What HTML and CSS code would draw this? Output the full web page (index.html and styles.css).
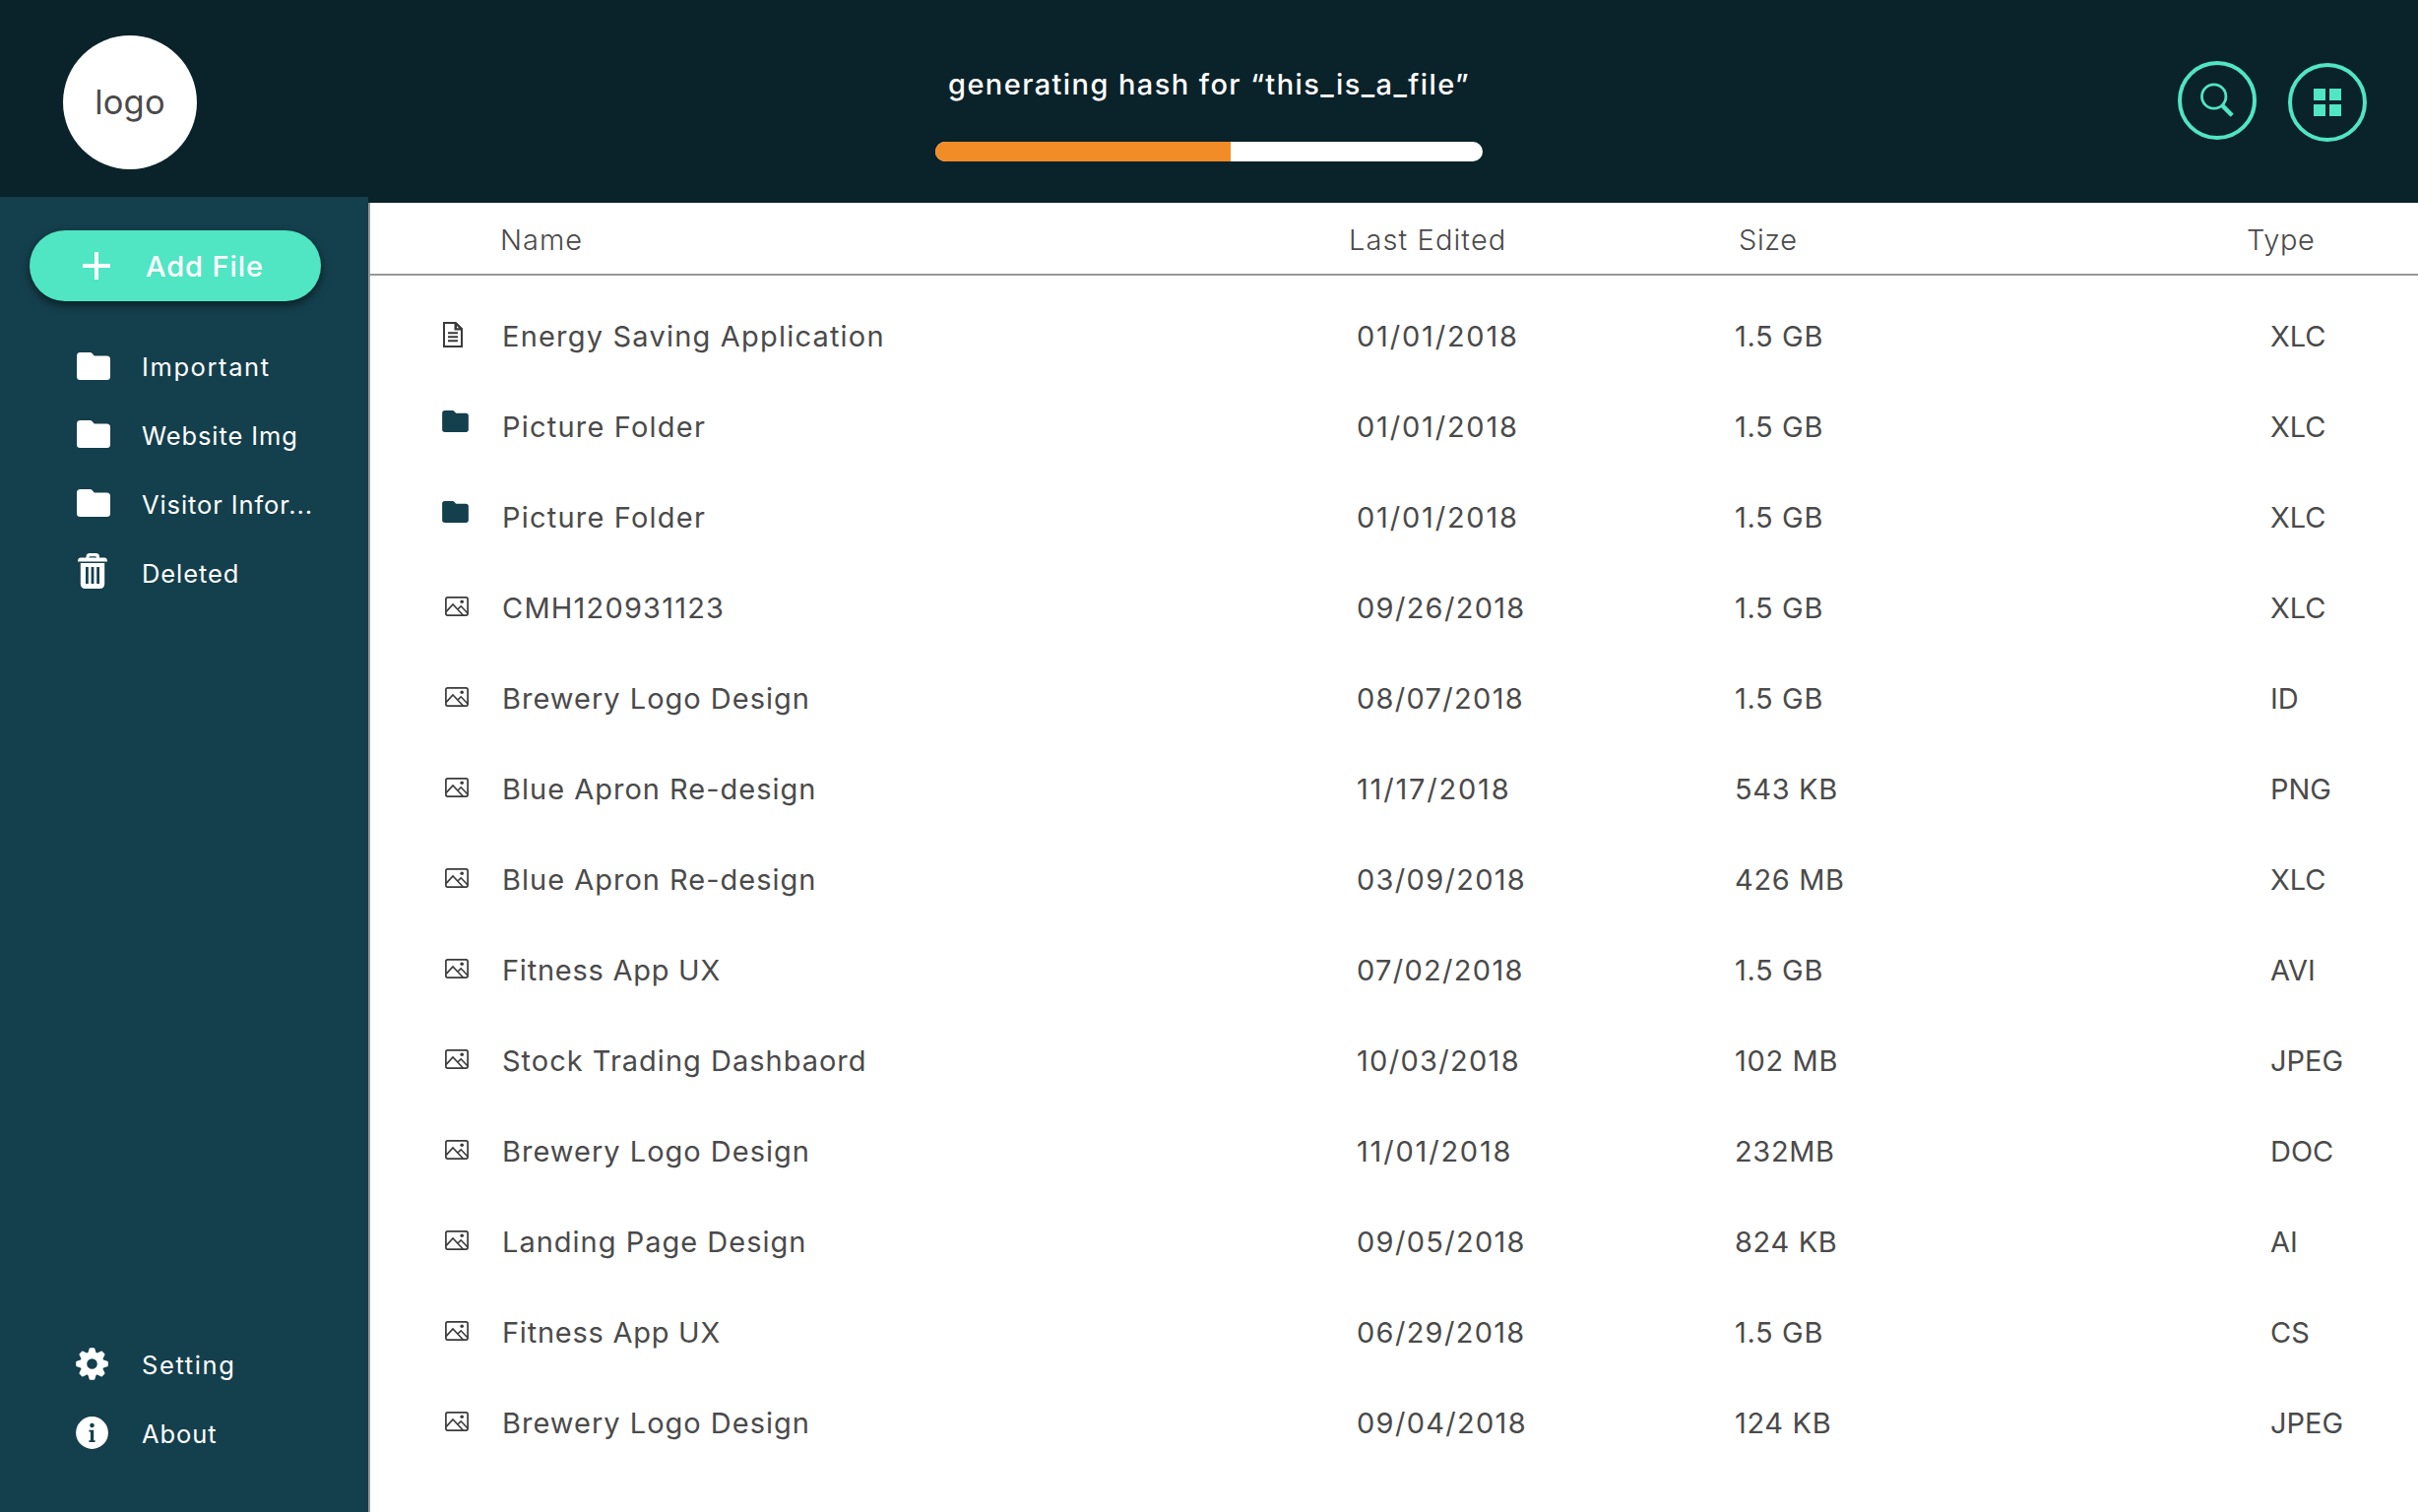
FILE: index.html
```html
<!DOCTYPE html>
<html lang="en">
<head>
<meta charset="utf-8">
<title>Files</title>
<link rel="stylesheet" href="styles.css">
</head>
<body>
<svg class="sprite" aria-hidden="true">
  <symbol id="folder" viewBox="0 0 34 28"><path d="M3.5 0H13.5Q14.8 0 15.8 1.2L17.8 3.4H30.5Q34 3.4 34 7V24.5Q34 28 30.5 28H3.5Q0 28 0 24.5V3.5Q0 0 3.5 0Z" fill="currentColor"/></symbol>
  <symbol id="doc" viewBox="0 0 20 26"><path d="M1 1H12.5L19 7.5V25H1Z" fill="none" stroke="currentColor" stroke-width="2"/><path d="M11.5 0H13.2L20 6.8V8.6H11.5ZM14 3.8V6.3H16.5Z" fill="currentColor" fill-rule="evenodd"/><path d="M5 11.2H15M5 15.2H15M5 19.2H15" stroke="currentColor" stroke-width="2"/></symbol>
  <symbol id="image" viewBox="0 0 24 20"><rect x=".9" y=".9" width="22.2" height="18.2" rx="1.8" fill="none" stroke="currentColor" stroke-width="1.7"/><circle cx="17.2" cy="5.2" r="1.8" fill="currentColor"/><path d="M1.2 15.4L8 8L18.4 19M12.8 13L16.2 9.8L23 17" fill="none" stroke="currentColor" stroke-width="1.6"/></symbol>
</svg>

<header class="topbar">
  <div class="brand"><div class="logo">logo</div></div>
  <div class="progress">
    <div class="progress-label">generating hash for “this_is_a_file”</div>
    <div class="progress-track"><div class="progress-fill" style="width:54%"></div></div>
  </div>
  <div class="actions">
    <button class="round search" aria-label="Search"><svg width="36" height="36" viewBox="0 0 36 36"><circle cx="14.7" cy="14" r="12.2" fill="none" stroke="currentColor" stroke-width="2.8"/><path d="M22.4 22.4L24 24" stroke="currentColor" stroke-width="2.4"/><path d="M23.4 23.4L33.2 33.2" stroke="currentColor" stroke-width="4.4"/></svg></button>
    <button class="round grid" aria-label="Grid view"><svg width="28" height="28" viewBox="0 0 28 28"><path d="M0 0h12v12H0zM16 0h12v12H16zM0 16h12v12H0zM16 16h12v12H16z" fill="currentColor"/></svg></button>
  </div>
</header>

<div class="layout">
  <aside class="sidebar">
    <button class="add"><svg width="28" height="28" viewBox="0 0 28 28"><path d="M14 0V28M0 14H28" stroke="currentColor" stroke-width="4"/></svg><span>Add File</span></button>
    <nav class="nav">
      <a class="item wide"><svg class="nav-folder"><use href="#folder"/></svg><span>Important</span></a>
      <a class="item"><svg class="nav-folder up"><use href="#folder"/></svg><span>Website Img</span></a>
      <a class="item"><svg class="nav-folder up"><use href="#folder"/></svg><span>Visitor Infor...</span></a>
      <a class="item"><svg class="trash" viewBox="0 0 30 36"><path d="M8.5 5.5V3.5Q8.5 0 12 0H18.5Q22 0 22 3.5V5.5H19V4.6Q19 3.2 17.6 3.2H12.8Q11.4 3.2 11.4 4.6V5.5Z" fill="currentColor"/><path d="M3 4.6H27Q30 4.6 30 8.6H0Q0 4.6 3 4.6Z" fill="currentColor"/><path d="M2.8 10H27.2V31Q27.2 36 22.2 36H7.8Q2.8 36 2.8 31ZM8 14V31H10.8V14ZM13.6 14V31H16.4V14ZM19.2 14V31H22V14Z" fill="currentColor" fill-rule="evenodd"/></svg><span>Deleted</span></a>
    </nav>
    <nav class="nav bottom">
      <a class="item wide"><svg class="gear" viewBox="-16.5 -16.5 33 33"><circle r="8.6" fill="none" stroke="currentColor" stroke-width="6.6"/><g fill="currentColor"><path id="teeth" d="M-4.4 -10.5L-2.8 -15.4Q-2.6 -16.3 -1.7 -16.3H1.7Q2.6 -16.3 2.8 -15.4L4.4 -10.5ZM-4.4 10.5L-2.8 15.4Q-2.6 16.3 -1.7 16.3H1.7Q2.6 16.3 2.8 15.4L4.4 10.5Z"/><use href="#teeth" transform="rotate(45)"/><use href="#teeth" transform="rotate(90)"/><use href="#teeth" transform="rotate(135)"/></g></svg><span>Setting</span></a>
      <a class="item"><svg class="info" viewBox="0 0 33 33"><circle cx="16.5" cy="16.5" r="16.4" fill="currentColor"/><circle cx="16.5" cy="9" r="2.3" fill="#143f4c"/><path d="M13.4 13.8H18.2V24.3H19.6V26H13.4V24.3H14.9V15.5H13.4Z" fill="#143f4c"/></svg><span>About</span></a>
    </nav>
  </aside>

  <main class="files">
    <div class="head"><span class="h-name">Name</span><span class="h-date">Last Edited</span><span class="h-size">Size</span><span class="h-type">Type</span></div>
    <div class="rows">
      <div class="row"><svg class="i-doc"><use href="#doc"/></svg><span class="name wide">Energy Saving Application</span><span class="date ones">01/01/2018</span><span class="size">1.5 GB</span><span class="type">XLC</span></div>
      <div class="row"><svg class="i-folder"><use href="#folder"/></svg><span class="name wide">Picture Folder</span><span class="date ones">01/01/2018</span><span class="size">1.5 GB</span><span class="type">XLC</span></div>
      <div class="row"><svg class="i-folder"><use href="#folder"/></svg><span class="name wide">Picture Folder</span><span class="date ones">01/01/2018</span><span class="size">1.5 GB</span><span class="type">XLC</span></div>
      <div class="row"><svg class="i-image"><use href="#image"/></svg><span class="name wide">CMH120931123</span><span class="date">09/26/2018</span><span class="size">1.5 GB</span><span class="type">XLC</span></div>
      <div class="row"><svg class="i-image"><use href="#image"/></svg><span class="name">Brewery Logo Design</span><span class="date">08/07/2018</span><span class="size">1.5 GB</span><span class="type">ID</span></div>
      <div class="row"><svg class="i-image"><use href="#image"/></svg><span class="name">Blue Apron Re-design</span><span class="date ones">11/17/2018</span><span class="size">543 KB</span><span class="type">PNG</span></div>
      <div class="row"><svg class="i-image"><use href="#image"/></svg><span class="name">Blue Apron Re-design</span><span class="date">03/09/2018</span><span class="size">426 MB</span><span class="type">XLC</span></div>
      <div class="row"><svg class="i-image"><use href="#image"/></svg><span class="name tight">Fitness App UX</span><span class="date">07/02/2018</span><span class="size">1.5 GB</span><span class="type">AVI</span></div>
      <div class="row"><svg class="i-image"><use href="#image"/></svg><span class="name">Stock Trading Dashbaord</span><span class="date">10/03/2018</span><span class="size">102 MB</span><span class="type">JPEG</span></div>
      <div class="row"><svg class="i-image"><use href="#image"/></svg><span class="name">Brewery Logo Design</span><span class="date ones">11/01/2018</span><span class="size">232MB</span><span class="type">DOC</span></div>
      <div class="row"><svg class="i-image"><use href="#image"/></svg><span class="name">Landing Page Design</span><span class="date">09/05/2018</span><span class="size">824 KB</span><span class="type">AI</span></div>
      <div class="row"><svg class="i-image"><use href="#image"/></svg><span class="name tight">Fitness App UX</span><span class="date">06/29/2018</span><span class="size">1.5 GB</span><span class="type">CS</span></div>
      <div class="row"><svg class="i-image"><use href="#image"/></svg><span class="name">Brewery Logo Design</span><span class="date">09/04/2018</span><span class="size">124 KB</span><span class="type">JPEG</span></div>
    </div>
  </main>
</div>
</body>
</html>
```
FILE: styles.css
```css
* { box-sizing: border-box; }
body {
  margin: 0;
  height: 1536px;
  display: flex;
  flex-direction: column;
  overflow: hidden;
  background: #fff;
  color: #4a4a4a;
  font-family: Inter, "Liberation Sans", sans-serif;
  font-size: 29px;
  line-height: 36px;
  white-space: nowrap;
}
button { border: 0; padding: 0; background: none; font: inherit; color: inherit; }
svg { display: block; flex: none; }
.sprite { display: none; }

/* top bar */
.topbar {
  flex: none;
  height: 206px;
  display: grid;
  grid-template-columns: 950px 556px 1fr;
  background: #0a2229;
}
.brand { padding: 36px 0 0 64px; }
.logo {
  width: 136px;
  height: 136px;
  border-radius: 50%;
  background: #fff;
  display: flex;
  align-items: center;
  justify-content: center;
  font-size: 34.5px;
  letter-spacing: .2px;
  padding-bottom: 1px;
}
.progress { padding-top: 68px; }
.progress-label {
  color: #fff;
  font-weight: 500;
  letter-spacing: 1.42px;
  padding-left: 13px;
}
.progress-track {
  margin-top: 40px;
  height: 20px;
  border-radius: 10px;
  background: #fff;
  overflow: hidden;
}
.progress-fill { height: 100%; background: #f28c26; }
.actions {
  display: flex;
  justify-content: flex-end;
  align-items: flex-start;
  gap: 32px;
  padding: 62px 52px 0 0;
  color: #50e5c3;
}
.round {
  width: 80px;
  height: 80px;
  border: 4px solid #50e5c3;
  border-radius: 50%;
  display: flex;
  align-items: center;
  justify-content: center;
}
.round.grid { margin-top: 2px; }

.layout { flex: 1; display: flex; min-height: 0; }

/* sidebar */
.sidebar {
  flex: none;
  width: 374px;
  margin-top: -6px;
  padding: 34px 0 44px 30px;
  display: flex;
  flex-direction: column;
  background: #143f4c;
  color: #fff;
}
.add {
  width: 296px;
  height: 72px;
  border-radius: 36px;
  background: #50e5c3;
  box-shadow: 0 4px 8px rgba(0, 0, 0, .5);
  display: flex;
  align-items: center;
  padding-left: 54px;
  gap: 36px;
  font-weight: 550;
  letter-spacing: .9px;
}
.add span { padding-top: 2px; }
.nav { display: flex; flex-direction: column; margin-top: 32px; }
.nav.bottom { margin-top: auto; }
.item {
  height: 70px;
  display: grid;
  grid-template-columns: 96px 1fr;
  align-items: center;
  padding-left: 18px;
  font-size: 25.5px;
  letter-spacing: .9px;
}
.item.wide { letter-spacing: 1.6px; }
.item > svg { justify-self: center; }
.nav-folder { width: 34px; height: 28px; margin: 0 3px 2px 0; }
.nav-folder.up { margin-bottom: 5px; }
.trash { width: 30px; height: 36px; margin: 0 4px 6px 0; }
.gear, .info { width: 33px; height: 33px; margin: 0 5px 3px 0; }

/* file list */
.files { flex: 1; border-left: 2px solid #979797; }
.head, .row { display: grid; align-items: center; }
.head {
  height: 74px;
  padding: 3px 0 0 132px;
  grid-template-columns: 862px 396px 516px 1fr;
  border-bottom: 2px solid #979797;
  font-weight: 300;
  letter-spacing: 1px;
}
.h-date { letter-spacing: 1.1px; }
.h-size, .h-type { letter-spacing: .6px; }
.rows { padding-top: 16px; }
.row {
  height: 92px;
  padding-left: 72px;
  grid-template-columns: 62px 868px 384px 544px 1fr;
}
.row svg { align-self: start; }
.i-doc { width: 20px; height: 26px; margin: 31px 0 0 2px; color: #3a3a3a; }
.i-folder { width: 27px; height: 22px; margin: 29px 0 0 1px; color: #143f4c; }
.i-image { width: 24px; height: 20px; margin: 34px 0 0 4px; color: #3a3a3a; }
.name { letter-spacing: 1px; }
.name.wide { letter-spacing: 1.2px; }
.name.tight { letter-spacing: .75px; }
.date { letter-spacing: 1.3px; }
.date.ones { letter-spacing: 1.8px; }
.size { letter-spacing: .65px; }
.type { letter-spacing: 0; }
```
